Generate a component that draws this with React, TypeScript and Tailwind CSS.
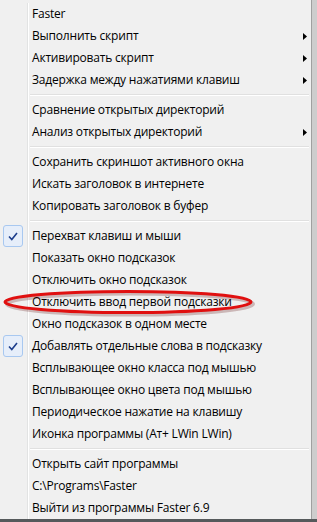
import React from 'react';

type Item =
  | { sep: true }
  | { label: string; sub?: boolean; checked?: boolean; sep?: false };

const ITEMS: Item[] = [
  { label: 'Faster' },
  { label: 'Выполнить скрипт', sub: true },
  { label: 'Активировать скрипт', sub: true },
  { label: 'Задержка между нажатиями клавиш', sub: true },
  { sep: true },
  { label: 'Сравнение открытых директорий' },
  { label: 'Анализ открытых директорий', sub: true },
  { sep: true },
  { label: 'Сохранить скриншот активного окна' },
  { label: 'Искать заголовок в интернете' },
  { label: 'Копировать заголовок в буфер' },
  { sep: true },
  { label: 'Перехват клавиш и мыши', checked: true },
  { label: 'Показать окно подсказок' },
  { label: 'Отключить окно подсказок' },
  { label: 'Отключить ввод первой подсказки' },
  { label: 'Окно подсказок в одном месте' },
  { label: 'Добавлять отдельные слова в подсказку', checked: true },
  { label: 'Всплывающее окно класса под мышью' },
  { label: 'Всплывающее окно цвета под мышью' },
  { label: 'Периодическое нажатие на клавишу' },
  { label: 'Иконка программы (Ат+ LWin LWin)' },
  { sep: true },
  { label: 'Открыть сайт программы' },
  { label: 'C:\\Programs\\Faster' },
  { label: 'Выйти из программы Faster 6.9' },
];

function CheckMark() {
  return (
    <div className="ml-[1px] w-[20px] h-[22px] rounded-[3px] border border-[#a8c8f0] bg-[#e6eefa] flex items-center justify-center">
      <svg width="10" height="9" viewBox="0 0 10 9">
        <path d="M1 4.5 L3.8 7.5 L9 1" fill="none" stroke="#1c3d8c" strokeWidth="1.6" />
      </svg>
    </div>
  );
}

export default function App() {
  return (
    <div
      className="relative w-[317px] h-[522px] overflow-hidden bg-[#55595b]"
      style={{ fontFamily: '"Open Sans", "Noto Sans", sans-serif' }}
    >
      <div className="absolute left-0 top-0 w-[317px] h-[519px] bg-[#cdcdcd]" />
      <div className="relative w-[312px] h-[519px] bg-[#f0f0f0] border-r border-[#a0a0a0] flex flex-col pt-[3px] pl-[2px] pr-[2px]">
        {/* gutter line */}
        <div className="absolute left-[27px] top-[3px] bottom-0 flex">
          <div className="w-px h-full bg-[#e2e3e3]" />
          <div className="w-px h-full bg-white" />
        </div>
        {ITEMS.map((it, i) =>
          it.sep ? (
            <div key={i} className="h-[8px] shrink-0 flex flex-col justify-center pl-[28px]">
              <div className="h-px bg-[#e0e0e0]" />
              <div className="h-px bg-white" />
            </div>
          ) : (
            <div key={i} className="relative h-[22px] shrink-0 flex items-center text-[12px] text-black">
              <div className="w-[28px] shrink-0 flex items-center justify-start">
                {it.checked && <CheckMark />}
              </div>
              <span className="pl-[2px] flex-1 whitespace-nowrap tracking-[-0.2px]">{it.label}</span>
              {it.sub && (
                <svg width="4" height="7" viewBox="0 0 4 7" className="mr-[2px]">
                  <path d="M0 0 L4 3.5 L0 7 Z" fill="#000" />
                </svg>
              )}
            </div>
          )
        )}
      </div>
      {/* red highlight ellipse */}
      <svg className="absolute left-0 top-[284px]" width="260" height="36" viewBox="0 0 260 36">
        <ellipse cx="130" cy="20" rx="123" ry="10.5" fill="none" stroke="#5a0a0a" strokeOpacity="0.25" strokeWidth="4" />
        <ellipse cx="128" cy="18" rx="123" ry="10.5" fill="none" stroke="#e01010" strokeWidth="3" />
      </svg>
    </div>
  );
}
